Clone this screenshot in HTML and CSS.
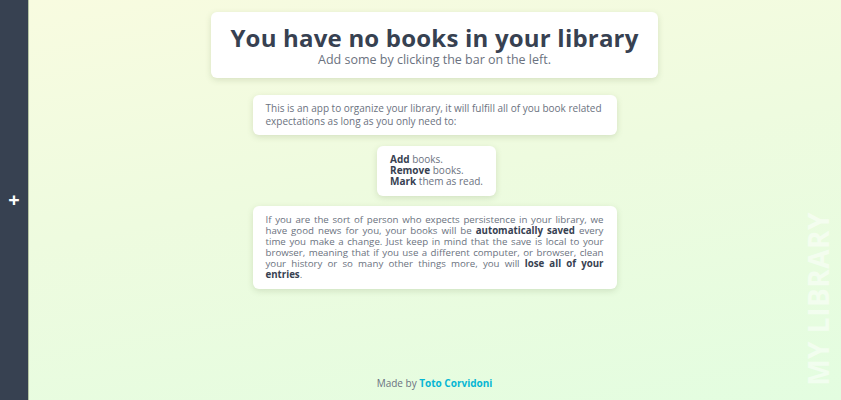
FILE: index.html
```html
<!DOCTYPE html>
<html lang="en">
<head>
<meta charset="utf-8">
<title>My Library</title>
<link rel="stylesheet" href="styles.css">
</head>
<body>
<div class="app">
  <aside class="sidebar">
    <span class="plus">+</span>
  </aside>
  <main class="main">
    <section class="card hero">
      <h1 class="title">You have no books in your library</h1>
      <p class="subtitle">Add some by clicking the bar on the left.</p>
    </section>
    <section class="card intro">
      <p>This is an app to organize your library, it will fulfill all of you book related expectations as long as you only need to:</p>
    </section>
    <section class="card actions">
      <p><b>Add</b> books.<br><b>Remove</b> books.<br><b>Mark</b> them as read.</p>
    </section>
    <section class="card info">
      <p>If you are the sort of person who expects persistence in your library, we have good news for you, your books will be <b>automatically saved</b> every time you make a change. Just keep in mind that the save is local to your browser, meaning that if you use a different computer, or browser, clean your history or so many other things more, you will <b>lose all of your entries</b>.</p>
    </section>
    <footer class="footer">Made by <span class="author">Toto Corvidoni</span></footer>
    <div class="brand">MY LIBRARY</div>
  </main>
</div>
</body>
</html>
```
FILE: styles.css
```css
* { box-sizing: border-box; }
html, body { margin: 0; height: 100%; }
body {
  font-family: "Open Sans", "Liberation Sans", sans-serif;
  color: #6b7280;
}
.app {
  display: flex;
  height: 400px;
}
.sidebar {
  width: 28px;
  flex: none;
  background: #374151;
  box-shadow: 1px 0 0 #b5c4a4;
  display: flex;
  align-items: center;
  justify-content: center;
  position: relative;
  z-index: 1;
}
.plus {
  color: #fff;
  font-size: 20px;
  font-weight: 700;
  line-height: 1;
}
.main {
  flex: 1;
  position: relative;
  overflow: hidden;
  background: linear-gradient(170deg, #f8fbe0 0%, #eefbdf 45%, #e3fde0 100%);
  display: flex;
  flex-direction: column;
  align-items: center;
  padding-top: 12px;
}
.card {
  background: #fff;
  border-radius: 6px;
  box-shadow: 0 2px 6px rgba(90, 110, 60, 0.18);
}
.card p { margin: 0; }
.card b { color: #374151; font-weight: 700; }
.hero {
  width: 447px;
  height: 66px;
  text-align: center;
  padding-top: 11px;
}
.title {
  margin: 0;
  font-size: 24px;
  font-weight: 700;
  color: #374151;
  line-height: 29px;
  white-space: nowrap;
  letter-spacing: 0.2px;
}
.subtitle {
  margin: 0;
  font-size: 12.5px;
  line-height: 15px;
  color: #6b7280;
}
.intro {
  margin-top: 17px;
  width: 364px;
  padding: 7px 13px 8px;
  font-size: 10px;
  line-height: 12.5px;
}
.actions {
  margin-top: 11px;
  padding: 8px 13px 9px;
  font-size: 10px;
  line-height: 11px;
  white-space: nowrap;
  margin-left: 4px;
}
.info {
  margin-top: 10px;
  width: 364px;
  padding: 8px 13px 9px;
  font-size: 9.7px;
  line-height: 11px;
  text-align: justify;
}
.footer {
  margin-top: auto;
  margin-bottom: 10px;
  font-size: 10px;
  color: #6b7280;
}
.author {
  color: #06b6d4;
  font-weight: 700;
}
.brand {
  position: absolute;
  right: 9px;
  bottom: 14px;
  writing-mode: vertical-rl;
  transform: rotate(180deg);
  font-size: 28px;
  font-weight: 700;
  letter-spacing: 0.5px;
  color: rgba(255, 255, 255, 0.5);
  line-height: 1;
}
```
